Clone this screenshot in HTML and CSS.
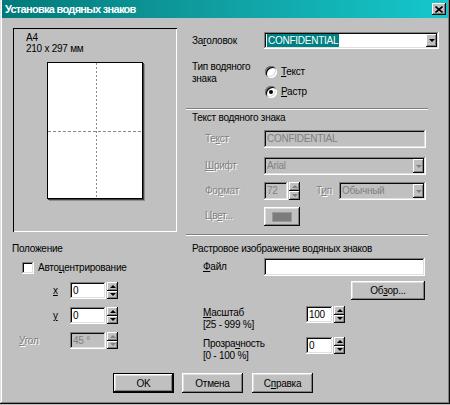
FILE: index.html
```html
<!DOCTYPE html>
<html lang="ru">
<head>
<meta charset="utf-8">
<title>Установка водяных знаков</title>
<link rel="stylesheet" href="styles.css">
</head>
<body>
<div class="window">
  <div class="titlebar">
    <span class="title">Установка водяных знаков</span>
    <span class="close"><svg width="8" height="7" viewBox="0 0 8 7"><path d="M0.5 0.5L7.5 6.5M7.5 0.5L0.5 6.5" stroke="#000" stroke-width="1.6"/></svg></span>
  </div>

  <div class="client">
    <div class="top">
      <!-- paper preview -->
      <div class="preview">
        <div class="paper-size">A4<br>210 x 297 мм</div>
        <div class="page">
          <svg width="94" height="135" viewBox="0 0 94 135">
            <line x1="48.5" y1="0" x2="48.5" y2="135" stroke="#8a8a8a" stroke-width="1" stroke-dasharray="2 2"/>
            <line x1="0" y1="68.5" x2="94" y2="68.5" stroke="#8a8a8a" stroke-width="1" stroke-dasharray="3 2"/>
          </svg>
        </div>
      </div>

      <div class="settings">
        <div class="row r-heading">
          <span class="lbl">За<u>г</u>оловок</span>
          <div class="combo w175">
            <span class="value"><span class="sel">CONFIDENTIAL</span></span>
            <span class="drop"><i class="tri-down"></i></span>
          </div>
        </div>

        <div class="row r-type">
          <span class="lbl two">Тип водяного<br>знака</span>
          <div class="radios">
            <div class="radio-item"><span class="radio"></span><span><u>Т</u>екст</span></div>
            <div class="radio-item"><span class="radio checked"></span><span><u>Р</u>астр</span></div>
          </div>
        </div>

        <div class="sep s1"></div>
        <div class="group-title">Текст водяного знака</div>

        <div class="row sub r-text">
          <span class="lbl dis">Те<u>к</u>ст</span>
          <div class="field disabled w162">CONFIDENTIAL</div>
        </div>

        <div class="row sub r-font">
          <span class="lbl dis"><u>Ш</u>рифт</span>
          <div class="combo disabled w162">
            <span class="value">Arial</span>
            <span class="drop"><i class="tri-down off"></i></span>
          </div>
        </div>

        <div class="row sub r-format">
          <span class="lbl dis">Фо<u>р</u>мат</span>
          <div class="spin">
            <div class="field disabled w24">72</div>
            <div class="arrows"><span><i class="tri-up off"></i></span><span><i class="tri-down off"></i></span></div>
          </div>
          <span class="lbl-type dis">Т<u>и</u>п</span>
          <div class="combo disabled w87">
            <span class="value">Обычный</span>
            <span class="drop"><i class="tri-down off"></i></span>
          </div>
        </div>

        <div class="row sub r-color">
          <span class="lbl dis">Цв<u>е</u>т...</span>
          <div class="color-btn"><span class="swatch"></span></div>
        </div>

        <div class="sep s2"></div>
      </div>
    </div>

    <div class="bottom">
      <div class="position">
        <div class="group-title pos-title">Положение</div>
        <div class="check-row">
          <span class="checkbox"></span>
          <span>Авто<u>ц</u>ентрирование</span>
        </div>
        <div class="spin-row">
          <span class="slbl"><u>x</u></span>
          <div class="spin">
            <div class="field w36">0</div>
            <div class="arrows"><span><i class="tri-up"></i></span><span><i class="tri-down"></i></span></div>
          </div>
        </div>
        <div class="spin-row">
          <span class="slbl"><u>y</u></span>
          <div class="spin">
            <div class="field w36">0</div>
            <div class="arrows"><span><i class="tri-up"></i></span><span><i class="tri-down"></i></span></div>
          </div>
        </div>
        <div class="spin-row">
          <span class="slbl angle dis"><u>У</u>гол</span>
          <div class="spin">
            <div class="field disabled w36">45 °</div>
            <div class="arrows"><span><i class="tri-up off"></i></span><span><i class="tri-down off"></i></span></div>
          </div>
        </div>
      </div>

      <div class="raster">
        <div class="group-title">Растровое изображение водяных знаков</div>
        <div class="row r-file">
          <span class="lbl"><u>Ф</u>айл</span>
          <div class="field w161"></div>
        </div>
        <div class="btn browse">Об<u>з</u>ор...</div>
        <div class="row r-scale">
          <span class="lbl wide"><u>М</u>асштаб<br>[25 - 999 %]</span>
          <div class="spin">
            <div class="field w27">100</div>
            <div class="arrows"><span><i class="tri-up"></i></span><span><i class="tri-down"></i></span></div>
          </div>
        </div>
        <div class="row r-opacity">
          <span class="lbl wide">Прозра<u>ч</u>ность<br>[0 - 100 %]</span>
          <div class="spin">
            <div class="field w27">0</div>
            <div class="arrows"><span><i class="tri-up"></i></span><span><i class="tri-down"></i></span></div>
          </div>
        </div>
      </div>
    </div>

    <div class="buttons">
      <div class="btn default">OK</div>
      <div class="btn">Отмена</div>
      <div class="btn help">С<u>п</u>равка</div>
    </div>
  </div>
</div>
</body>
</html>
```

FILE: styles.css
```css
* { box-sizing: border-box; }

html, body {
  margin: 0;
  padding: 0;
}

body {
  width: 450px;
  height: 405px;
  overflow: hidden;
  background: #c0c0c0;
  color: #000;
  font-family: "Liberation Sans", Arial, sans-serif;
  font-size: 10px;
  letter-spacing: -0.25px;
}

u {
  text-decoration: underline;
  text-underline-offset: 1px;
}

/* ---- window frame ---- */
.window {
  width: 450px;
  height: 404px;
  padding: 0 2px 2px 2px;
  background: #c0c0c0;
  box-shadow:
    inset -1px -1px #0a0a0a,
    inset 1px 0 #dfdfdf,
    inset -2px -2px #808080,
    inset 2px 0 #ffffff;
}

.titlebar {
  display: flex;
  align-items: center;
  justify-content: space-between;
  height: 18px;
  padding: 0 2px 0 3px;
  background: linear-gradient(90deg, #007a7a 0%, #109c9e 45%, #14c8cc 100%);
  color: #fff;
  font-weight: bold;
  font-size: 11px;
  letter-spacing: -0.7px;
}

.close {
  display: flex;
  align-items: center;
  justify-content: center;
  width: 14px;
  height: 12px;
  background: #c0c0c0;
  box-shadow:
    inset -1px -1px #0a0a0a,
    inset 1px 1px #ffffff,
    inset -2px -2px #808080;
}

.client {
  padding-top: 10px;
}

/* ---- shared controls ---- */
.dis {
  color: #808080;
  text-shadow: 1px 1px 0 #fff;
}

.field {
  height: 18px;
  padding: 3px 3px 0 3px;
  line-height: 12px;
  background: #fff;
  white-space: nowrap;
  box-shadow:
    inset -1px -1px #ffffff,
    inset 1px 1px #808080,
    inset -2px -2px #dfdfdf,
    inset 2px 2px #0a0a0a;
}

.field.disabled {
  background: #c0c0c0;
  color: #808080;
}

.combo {
  display: flex;
  height: 17px;
  padding: 2px;
  background: #fff;
  box-shadow:
    inset -1px -1px #ffffff,
    inset 1px 1px #808080,
    inset -2px -2px #dfdfdf,
    inset 2px 2px #0a0a0a;
}

.combo.disabled {
  background: #c0c0c0;
  color: #808080;
}

.combo .value {
  flex: 1;
  padding-left: 1px;
  line-height: 13px;
  white-space: nowrap;
}

.sel {
  display: inline-block;
  padding: 0 1px;
  background: #008080;
  color: #fff;
}

.drop {
  display: flex;
  align-items: center;
  justify-content: center;
  width: 11px;
  background: #c0c0c0;
  box-shadow:
    inset -1px -1px #0a0a0a,
    inset 1px 1px #ffffff,
    inset -2px -2px #808080;
}

.tri-down, .tri-up {
  display: block;
  width: 0;
  height: 0;
  border-left: 3px solid transparent;
  border-right: 3px solid transparent;
}

.tri-down { border-top: 3px solid #000; }
.tri-up { border-bottom: 3px solid #000; }
.tri-down.off { border-top-color: #808080; }
.tri-up.off { border-bottom-color: #808080; }

.spin {
  display: flex;
  gap: 1px;
  height: 17px;
}

.spin .field {
  height: 17px;
}

.arrows {
  display: flex;
  flex-direction: column;
  width: 11px;
}

.arrows span {
  flex: 1;
  display: flex;
  align-items: center;
  justify-content: center;
  background: #c0c0c0;
  box-shadow:
    inset -1px -1px #0a0a0a,
    inset 1px 1px #ffffff,
    inset -2px -2px #808080;
}

.btn {
  display: flex;
  align-items: center;
  justify-content: center;
  height: 20px;
  background: #c0c0c0;
  box-shadow:
    inset -1px -1px #0a0a0a,
    inset 1px 1px #ffffff,
    inset -2px -2px #808080,
    inset 2px 2px #dfdfdf;
}

.btn.default {
  border: 1px solid #000;
}

.sep {
  width: 242px;
  height: 2px;
  border-top: 1px solid #808080;
  border-bottom: 1px solid #fff;
}

.group-title {
  padding-left: 6px;
  line-height: 12px;
}

.w175 { width: 175px; }
.w162 { width: 162px; }
.w161 { width: 161px; }
.w87 { width: 87px; }
.w36 { width: 36px; }
.w27 { width: 27px; }
.w24 { width: 24px; }

/* ---- top half ---- */
.top {
  display: flex;
  height: 208px;
}

.preview {
  width: 164px;
  height: 204px;
  margin-left: 11px;
  padding: 4px 0 0 13px;
  box-shadow: inset 1px 1px #000, inset -1px -1px #fff;
}

.paper-size {
  line-height: 11px;
}

.page {
  width: 96px;
  height: 137px;
  margin: 8px 0 0 21px;
  background: #fff;
  border: 1px solid #000;
  box-shadow: 1px 1px 0 #404040, 2px 2px 0 #909090;
}

.page svg { display: block; }

.settings {
  width: 254px;
  margin-left: 9px;
}

.row {
  display: flex;
  align-items: flex-start;
}

.lbl {
  flex: none;
  width: 78px;
  padding-left: 6px;
  white-space: nowrap;
}

.r-heading { margin-top: 4px; }
.r-heading .lbl { line-height: 17px; }

.r-type { margin-top: 12px; }
.lbl.two { line-height: 12px; }

.radios {
  display: flex;
  flex-direction: column;
  gap: 8px;
  margin: 5px 0 0 1px;
}

.radio-item {
  display: flex;
  align-items: center;
  gap: 4px;
  line-height: 12px;
}

.radio {
  position: relative;
  width: 12px;
  height: 12px;
  border-radius: 50%;
  background: #fff;
  box-shadow:
    inset 1px 1px #808080,
    inset -1px -1px #ffffff,
    inset 2px 2px #0a0a0a,
    inset -2px -2px #dfdfdf;
}

/* dot of the selected radio */
.radio.checked::after {
  content: "";
  position: absolute;
  left: 4px;
  top: 4px;
  width: 4px;
  height: 4px;
  border-radius: 50%;
  background: #000;
}

.sep.s1 { margin-top: 10px; }
.settings .group-title { margin-top: 2px; }

.sub .lbl {
  padding-left: 19px;
  line-height: 18px;
}

.r-text { margin-top: 6px; }
.r-font { margin-top: 9px; }
.r-format { margin-top: 7px; }
.r-color { margin-top: 7px; }

.r-font .combo { height: 18px; }

.r-format .spin { height: 18px; }
.r-format .spin .field { height: 18px; }

.lbl-type {
  width: 23px;
  margin-left: 16px;
  line-height: 18px;
}

.r-format .combo { height: 18px; }

.color-btn {
  display: flex;
  align-items: center;
  justify-content: center;
  width: 36px;
  height: 19px;
  background: #c0c0c0;
  box-shadow:
    inset -1px -1px #0a0a0a,
    inset 1px 1px #ffffff,
    inset -2px -2px #808080,
    inset 2px 2px #dfdfdf;
}

.swatch {
  width: 20px;
  height: 10px;
  background: #7c7c7c;
  border: 1px solid #9a9a9a;
}

.sep.s2 { margin-top: 8px; }

/* ---- bottom half ---- */
.bottom {
  display: flex;
  height: 137px;
}

.position {
  width: 164px;
  margin-left: 11px;
  padding-top: 7px;
}

.pos-title {
  padding-left: 0;
  margin-left: -1px;
}

.check-row {
  display: flex;
  align-items: center;
  gap: 4px;
  margin: 7px 0 0 9px;
  line-height: 12px;
}

.checkbox {
  width: 12px;
  height: 12px;
  background: #fff;
  box-shadow:
    inset -1px -1px #ffffff,
    inset 1px 1px #808080,
    inset -2px -2px #dfdfdf,
    inset 2px 2px #0a0a0a;
}

.spin-row {
  display: flex;
  margin-top: 8px;
}

.slbl {
  width: 57px;
  padding-left: 40px;
  line-height: 17px;
}

.slbl.angle { padding-left: 6px; }

.raster {
  width: 254px;
  margin-left: 9px;
  padding-top: 7px;
}

.raster .lbl {
  padding-left: 17px;
}

.r-file { margin-top: 3px; }
.r-file .lbl { line-height: 18px; }

.browse {
  width: 74px;
  height: 19px;
  margin: 5px 0 0 165px;
}

.lbl.wide {
  width: 120px;
  line-height: 12px;
  padding-top: 1px;
}

.r-scale { margin-top: 6px; }
.r-opacity { margin-top: 6px; }

/* ---- dialog buttons ---- */
.buttons {
  display: flex;
  gap: 8px;
  padding-left: 111px;
}

.buttons .btn { width: 61px; }
.buttons .help { margin-left: 1px; }
```
